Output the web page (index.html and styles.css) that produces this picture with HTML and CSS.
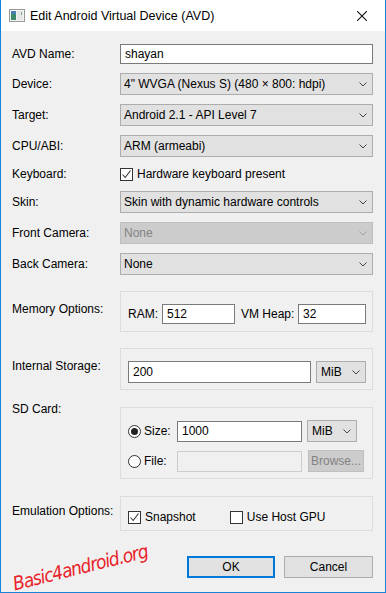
FILE: index.html
```html
<!DOCTYPE html>
<html lang="en">
  <head>
    <meta charset="UTF-8" />
    <title>Edit Android Virtual Device (AVD)</title>
    <link rel="stylesheet" href="styles.css">
  </head>
  <body>
    <div class="window">
      <div class="titlebar">
        <svg class="app-icon" width="16" height="13" viewBox="0 0 16 13">
          <rect x="0.5" y="0.5" width="15" height="12" fill="#f4f4f4" stroke="#9a9a9a" />
          <rect x="2" y="2" width="5" height="9" fill="#3c8a6a" />
          <rect x="2" y="2" width="5" height="3" fill="#4a7fb0" />
          <rect x="8" y="2" width="6" height="9" fill="#e6e6e6" />
          <rect x="12" y="3" width="1" height="3" fill="#7fb07f" />
        </svg>
        <span class="title">Edit Android Virtual Device (AVD)</span>
        <svg class="close" width="10" height="10" viewBox="0 0 10 10">
          <path d="M0 0 L10 10 M10 0 L0 10" stroke="#111" stroke-width="1.1" fill="none" />
        </svg>
      </div>

      <div class="content">
        <div class="row r-name">
          <span class="lbl">AVD Name:</span>
          <div class="textbox wide">shayan</div>
        </div>

        <div class="row r-sel">
          <span class="lbl">Device:</span>
          <div class="select wide">4" WVGA (Nexus S) (480 × 800: hdpi)<svg class="chev" width="8" height="5" viewBox="0 0 8 5"><path d="M0.5 0.5 L4 4 L7.5 0.5" /></svg></div>
        </div>

        <div class="row r-sel">
          <span class="lbl">Target:</span>
          <div class="select wide">Android 2.1 - API Level 7<svg class="chev" width="8" height="5" viewBox="0 0 8 5"><path d="M0.5 0.5 L4 4 L7.5 0.5" /></svg></div>
        </div>

        <div class="row r-sel">
          <span class="lbl">CPU/ABI:</span>
          <div class="select wide">ARM (armeabi)<svg class="chev" width="8" height="5" viewBox="0 0 8 5"><path d="M0.5 0.5 L4 4 L7.5 0.5" /></svg></div>
        </div>

        <div class="row r-check">
          <span class="lbl">Keyboard:</span>
          <span class="check on"><svg width="11" height="11" viewBox="0 0 11 11"><path d="M1.5 5.5 L4.2 8.5 L9.5 1.5" /></svg></span>
          <span class="opt">Hardware keyboard present</span>
        </div>

        <div class="row r-sel">
          <span class="lbl">Skin:</span>
          <div class="select wide">Skin with dynamic hardware controls<svg class="chev" width="8" height="5" viewBox="0 0 8 5"><path d="M0.5 0.5 L4 4 L7.5 0.5" /></svg></div>
        </div>

        <div class="row r-sel r-front">
          <span class="lbl">Front Camera:</span>
          <div class="select wide disabled">None<svg class="chev" width="8" height="5" viewBox="0 0 8 5"><path d="M0.5 0.5 L4 4 L7.5 0.5" /></svg></div>
        </div>

        <div class="row r-sel">
          <span class="lbl">Back Camera:</span>
          <div class="select wide">None<svg class="chev" width="8" height="5" viewBox="0 0 8 5"><path d="M0.5 0.5 L4 4 L7.5 0.5" /></svg></div>
        </div>

        <div class="row r-group r-memory">
          <span class="lbl">Memory Options:</span>
          <div class="group">
            <div class="line">
              <span class="ram-lbl">RAM:</span>
              <div class="textbox ram">512</div>
              <span class="heap-lbl">VM Heap:</span>
              <div class="textbox heap">32</div>
            </div>
          </div>
        </div>

        <div class="row r-group r-storage">
          <span class="lbl">Internal Storage:</span>
          <div class="group">
            <div class="line">
              <div class="textbox storage">200</div>
              <div class="select unit">MiB<svg class="chev" width="8" height="5" viewBox="0 0 8 5"><path d="M0.5 0.5 L4 4 L7.5 0.5" /></svg></div>
            </div>
          </div>
        </div>

        <div class="row r-group r-sd">
          <span class="lbl">SD Card:</span>
          <div class="group">
            <div class="line">
              <span class="radio on"></span>
              <span class="radio-lbl">Size:</span>
              <div class="textbox sd">1000</div>
              <div class="select unit">MiB<svg class="chev" width="8" height="5" viewBox="0 0 8 5"><path d="M0.5 0.5 L4 4 L7.5 0.5" /></svg></div>
            </div>
            <div class="line line-file">
              <span class="radio"></span>
              <span class="radio-lbl">File:</span>
              <div class="textbox sd off"></div>
              <div class="btn browse">Browse...</div>
            </div>
          </div>
        </div>

        <div class="row r-group r-emu">
          <span class="lbl">Emulation Options:</span>
          <div class="group">
            <div class="line">
              <span class="check on"><svg width="11" height="11" viewBox="0 0 11 11"><path d="M1.5 5.5 L4.2 8.5 L9.5 1.5" /></svg></span>
              <span class="opt snap">Snapshot</span>
              <span class="check"></span>
              <span class="opt">Use Host GPU</span>
            </div>
          </div>
        </div>

        <div class="row r-buttons">
          <span class="watermark">Basic4android.org</span>
          <div class="btn ok">OK</div>
          <div class="btn">Cancel</div>
        </div>
      </div>
    </div>
  </body>
</html>
```

FILE: styles.css
```css
body {
  margin: 0;
  font-family: "Segoe UI", "Liberation Sans", Arial, sans-serif;
  font-size: 12px;
  color: #000;
  background: #fff;
}

.window {
  width: 386px;
  height: 593px;
  box-sizing: border-box;
  border: 1px solid #1883d7;
  border-top: none;
  background: #f0f0f0;
  overflow: hidden;
}

.titlebar {
  height: 31px;
  background: #fff;
  display: flex;
  align-items: center;
  padding-left: 8px;
}

.app-icon {
  margin-right: 5px;
}

.title {
  flex: 1;
  font-size: 12.5px;
}

.close {
  margin-right: 18px;
}

.content {
  padding: 13px 12px 0 11px;
}

.row {
  display: flex;
  align-items: center;
}

.lbl {
  width: 108px;
  flex: none;
  line-height: 16px;
}

.wide {
  width: 253px;
}

.textbox {
  box-sizing: border-box;
  height: 20px;
  border: 1px solid #7a7a7a;
  background: #fff;
  padding-left: 4px;
  line-height: 18px;
}

.textbox.off {
  border-color: #cccccc;
  background: #f0f0f0;
}

.select {
  box-sizing: border-box;
  height: 22px;
  border: 1px solid #adadad;
  background: #e1e1e1;
  padding-left: 3px;
  line-height: 20px;
  display: flex;
  justify-content: space-between;
  align-items: center;
}

.chev {
  margin-right: 5px;
  fill: none;
  stroke: #444;
  stroke-width: 1;
}

.select.disabled {
  background: #cccccc;
  border-color: #bfbfbf;
  color: #838383;
}

.select.disabled .chev {
  stroke: #a0a0a0;
}

.r-name {
  margin-bottom: 9px;
}

.r-sel {
  height: 22px;
  margin-bottom: 9px;
}

.r-front {
  margin-bottom: 9px;
}

.r-check {
  height: 16px;
  margin-bottom: 9px;
}

.check {
  box-sizing: border-box;
  width: 13px;
  height: 13px;
  border: 1px solid #333;
  background: #fff;
  flex: none;
  display: flex;
  align-items: center;
  justify-content: center;
}

.check svg {
  fill: none;
  stroke: #333;
  stroke-width: 1.1;
}

.opt {
  margin-left: 4px;
}

.opt.snap {
  margin-right: 34px;
}

.radio {
  box-sizing: border-box;
  width: 13px;
  height: 13px;
  border: 1px solid #333;
  border-radius: 50%;
  background: #fff;
  flex: none;
  display: flex;
  align-items: center;
  justify-content: center;
}

.radio.on::after {
  content: "";
  width: 7px;
  height: 7px;
  border-radius: 50%;
  background: #222;
}

.r-group {
  align-items: flex-start;
}

.group {
  box-sizing: border-box;
  width: 253px;
  border: 1px solid #dcdcdc;
  padding: 12px 6px 0 7px;
}

.line {
  display: flex;
  align-items: center;
}

.r-memory {
  margin-top: 16px;
}

.r-memory .lbl {
  padding-top: 10px;
}

.r-memory .group {
  height: 41px;
}

.ram-lbl {
  width: 34px;
}

.textbox.ram {
  width: 73px;
}

.heap-lbl {
  margin-left: 6px;
  width: 57px;
}

.textbox.heap {
  width: 68px;
}

.r-storage {
  margin-top: 16px;
}

.r-storage .lbl {
  padding-top: 10px;
}

.r-storage .group {
  height: 42px;
}

.textbox.storage {
  width: 183px;
  height: 22px;
  line-height: 20px;
}

.unit {
  width: 50px;
  margin-left: 5px;
  padding-left: 4px;
}

.r-sd {
  margin-top: 11px;
}

.r-sd .group {
  margin-top: 6px;
  height: 72px;
}

.radio-lbl {
  margin-left: 3px;
  width: 33px;
}

.textbox.sd {
  width: 125px;
  height: 21px;
  line-height: 19px;
}

.line-file {
  margin-top: 8px;
}

.r-emu {
  margin-top: 17px;
}

.r-emu .lbl {
  padding-top: 7px;
}

.r-emu .group {
  height: 35px;
  padding-top: 13px;
}

.btn {
  box-sizing: border-box;
  width: 89px;
  height: 22px;
  border: 1px solid #adadad;
  background: #e1e1e1;
  text-align: center;
  line-height: 20px;
}

.btn.browse {
  width: 56px;
  height: 22px;
  margin-left: 6px;
  background: #cccccc;
  border-color: #bfbfbf;
  color: #838383;
}

.r-buttons {
  margin-top: 25px;
  justify-content: flex-end;
  gap: 9px;
}

.btn.ok {
  width: 88px;
  border: 2px solid #0078d7;
  line-height: 18px;
}

.watermark {
  align-self: flex-start;
  margin-right: auto;
  margin-top: 0;
  margin-left: -1px;
  line-height: 22px;
  font-family: "DejaVu Sans Condensed", "DejaVu Sans", sans-serif;
  font-style: oblique;
  font-size: 19px;
  color: #e82228;
  transform: rotate(-14deg);
  letter-spacing: -1px;
}
```
